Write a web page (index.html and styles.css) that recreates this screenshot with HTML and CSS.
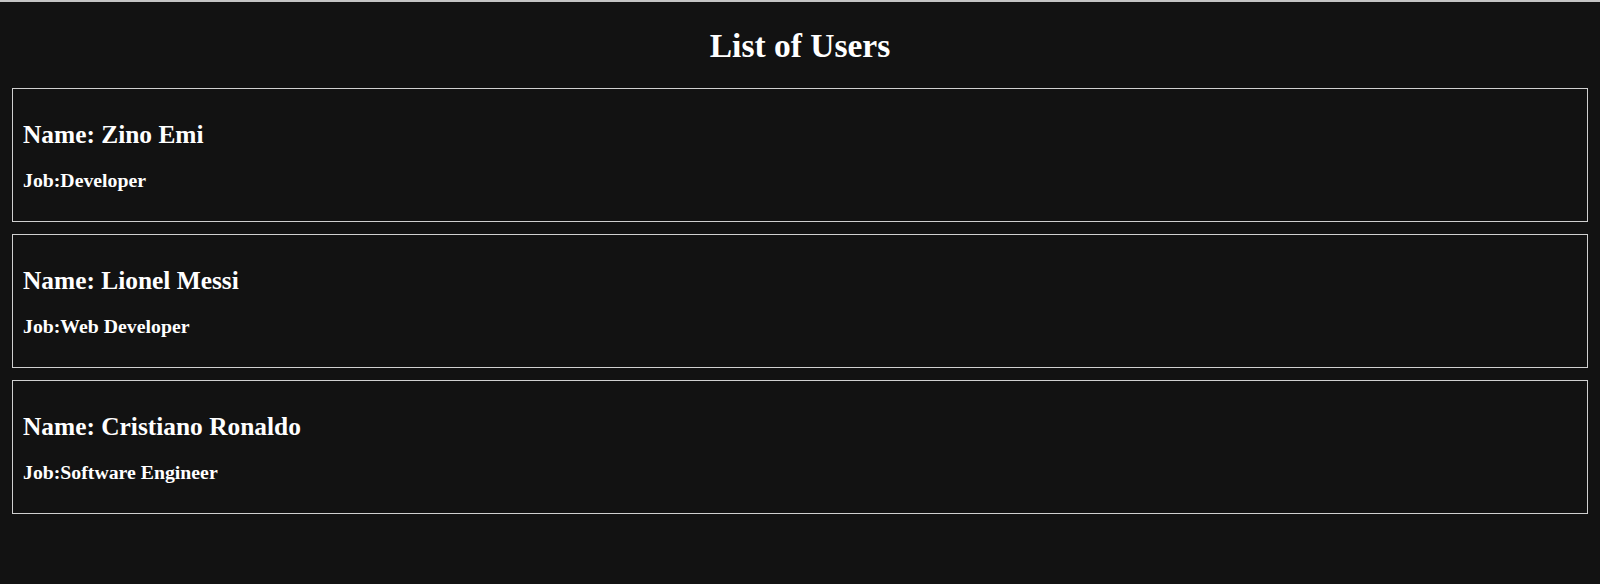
FILE: index.html
```html
<!DOCTYPE html>
<html lang="en">
<head>
<meta charset="utf-8">
<title>List of Users</title>
<link rel="stylesheet" href="styles.css">
</head>
<body>
<div class="app">
  <h1 class="title">List of Users</h1>
  <div class="user-list">
    <div class="user-card">
      <h2 class="user-name">Name: Zino Emi</h2>
      <h3 class="user-job">Job:Developer</h3>
    </div>
    <div class="user-card">
      <h2 class="user-name">Name: Lionel Messi</h2>
      <h3 class="user-job">Job:Web Developer</h3>
    </div>
    <div class="user-card">
      <h2 class="user-name">Name: Cristiano Ronaldo</h2>
      <h3 class="user-job">Job:Software Engineer</h3>
    </div>
  </div>
</div>
</body>
</html>
```
FILE: styles.css
```css
html, body {
  margin: 0;
  padding: 0;
  background: #121212;
}
body {
  border-top: 2px solid #c4c4c4;
  min-height: 582px;
  font-family: "Liberation Serif", "Times New Roman", serif;
  color: #ffffff;
}
.app {
  padding: 0 12px;
}
.title {
  margin: 0;
  padding: 25px 0 23px;
  font-size: 33.5px;
  font-weight: bold;
  text-align: center;
}
.user-list {
  display: flex;
  flex-direction: column;
  gap: 12px;
}
.user-card {
  border: 1px solid #d0d0d0;
  padding: 10px 10px;
}
.user-name {
  margin: 21px 0 20px;
  font-size: 25.4px;
  font-weight: bold;
}
.user-job {
  margin: 0 0 19px;
  font-size: 19.8px;
  font-weight: bold;
}
```
